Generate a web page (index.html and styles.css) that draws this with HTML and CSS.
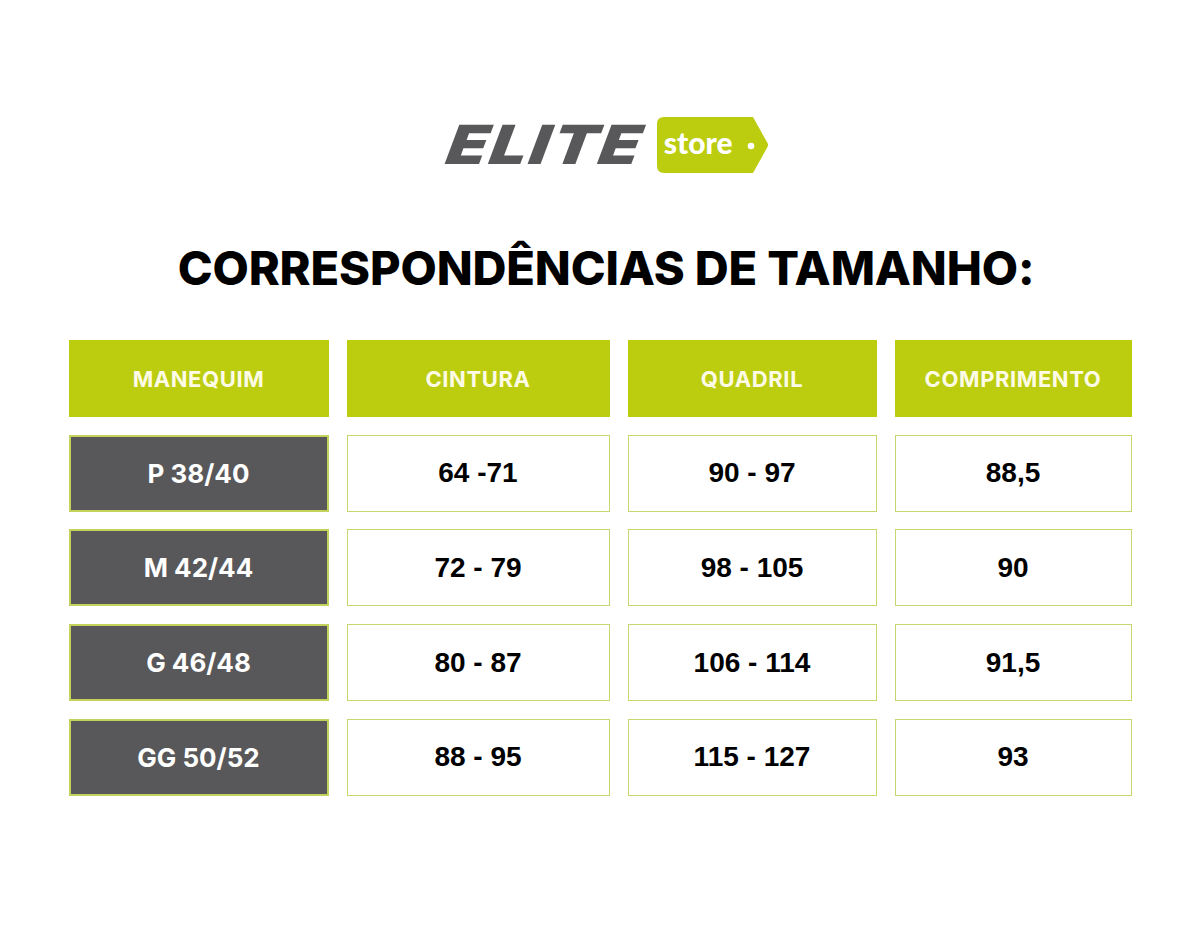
FILE: index.html
```html
<!DOCTYPE html>
<html lang="pt-BR">
<head>
<meta charset="utf-8">
<title>Correspondências de tamanho</title>
<link rel="stylesheet" href="styles.css">
</head>
<body>
<div class="page">
  <header class="logo">
    <span class="logo-elite">ELITE</span>
    <span class="logo-tag">
      <svg class="tag-shape" width="112" height="56" viewBox="0 0 112 56" aria-hidden="true">
        <path d="M7 0 H96 L110.5 26 Q111.5 28 110.5 30 L96 56 H7 Q0 56 0 49 V7 Q0 0 7 0 Z" fill="#bccd10"/>
        <circle cx="94" cy="29" r="3.3" fill="#ffffff"/>
      </svg>
      <span class="tag-text">store</span>
    </span>
  </header>

  <h1 class="title">CORRESPONDÊNCIAS DE TAMANHO:</h1>

  <div class="table">
    <div class="cell head">MANEQUIM</div>
    <div class="cell head">CINTURA</div>
    <div class="cell head">QUADRIL</div>
    <div class="cell head">COMPRIMENTO</div>

    <div class="cell size">P 38/40</div>
    <div class="cell val">64 -71</div>
    <div class="cell val">90 - 97</div>
    <div class="cell val">88,5</div>

    <div class="cell size">M 42/44</div>
    <div class="cell val">72 - 79</div>
    <div class="cell val">98 - 105</div>
    <div class="cell val">90</div>

    <div class="cell size">G 46/48</div>
    <div class="cell val">80 - 87</div>
    <div class="cell val">106 - 114</div>
    <div class="cell val">91,5</div>

    <div class="cell size">GG 50/52</div>
    <div class="cell val">88 - 95</div>
    <div class="cell val">115 - 127</div>
    <div class="cell val">93</div>
  </div>
</div>
</body>
</html>
```

FILE: styles.css
```css
* { box-sizing: border-box; }
html, body {
  margin: 0;
  padding: 0;
  background: #ffffff;
}
.page {
  width: 1200px;
  height: 933px;
  display: flex;
  flex-direction: column;
  align-items: center;
  padding-top: 117px;
}
.logo {
  display: flex;
  align-items: center;
  gap: 13px;
  height: 56px;
  margin-left: 52px;
}
.logo-elite {
  font-family: "Inter", "Liberation Sans", sans-serif;
  font-weight: 900;
  font-style: italic;
  font-size: 54px;
  line-height: 1;
  color: #58585a;
  letter-spacing: 2px;
  display: inline-block;
  transform: scaleX(1.22) skewX(-8deg);
  transform-origin: right center;
}
.logo-tag {
  position: relative;
  width: 112px;
  height: 56px;
  display: block;
}
.tag-shape {
  position: absolute;
  left: 0;
  top: 0;
}
.tag-text {
  position: absolute;
  left: 7px;
  top: 10px;
  font-family: "Lato", "Open Sans", sans-serif;
  font-weight: 900;
  font-size: 30px;
  line-height: 1;
  color: #ffffff;
  letter-spacing: 0;
}
.title {
  margin: 71px 0 0 12px;
  font-family: "Inter", "Liberation Sans", sans-serif;
  font-weight: 800;
  font-size: 47px;
  line-height: 1;
  color: #000000;
  letter-spacing: -0.15px;
}
.table {
  margin-top: 49px;
  display: grid;
  grid-template-columns: 260px 263px 249px 237px;
  grid-auto-rows: 77px;
  column-gap: 18px;
  row-gap: 17.7px;
}
.cell {
  display: flex;
  align-items: center;
  justify-content: center;
}
.head {
  background: #bccd10;
  color: #fdfbe6;
  font-family: "Inter", "Liberation Sans", sans-serif;
  font-weight: 700;
  font-size: 22px;
  letter-spacing: 0.6px;
}
.size {
  background: #58585a;
  border: 2px solid #c3d25a;
  color: #ffffff;
  font-family: "Inter", "Liberation Sans", sans-serif;
  font-weight: 700;
  font-size: 26px;
}
.val {
  background: #ffffff;
  border: 1.5px solid #c9d56e;
  color: #000000;
  font-family: "Liberation Sans", Arial, sans-serif;
  font-weight: 700;
  font-size: 28px;
}
```
